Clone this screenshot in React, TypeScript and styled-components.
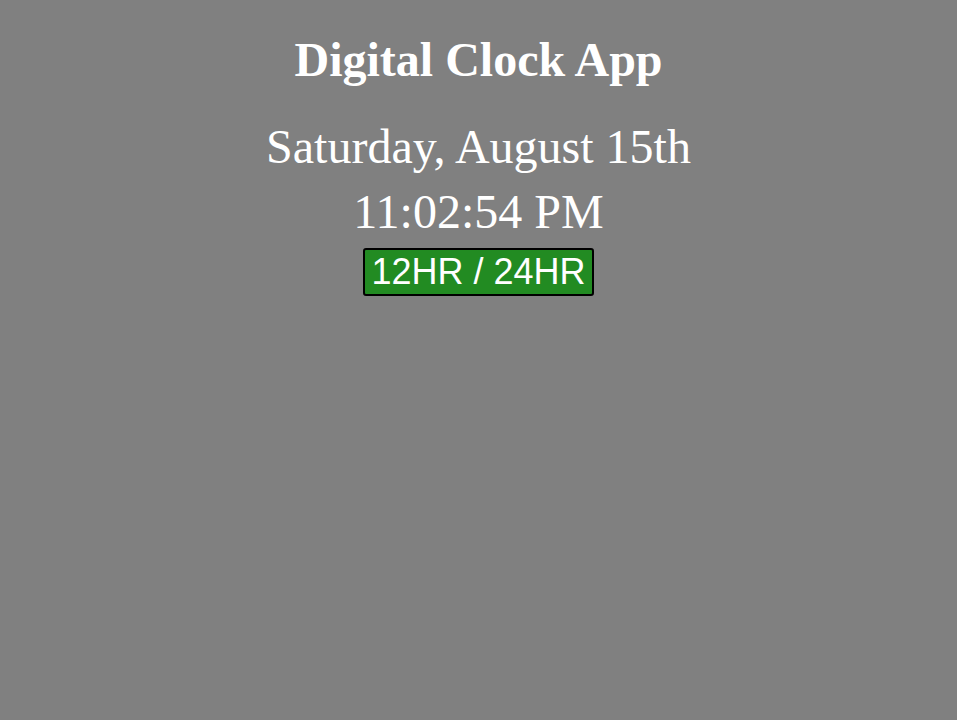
import { createGlobalStyle } from "styled-components";
import styled from "styled-components";

const GlobalStyle = createGlobalStyle`
  html, body {
    background-color: gray;
  }
  body {
    margin: 8px;
    font-family: "Liberation Serif", "Times New Roman", serif;
    color: white;
  }
`;

const Container = styled.main`
  display: flex;
  flex-direction: column;
  align-items: center;
  text-align: center;
`;

const Title = styled.h1`
  font-size: 48px;
  font-weight: bold;
  margin: 24px 0 32px;
  line-height: normal;
`;

const DateText = styled.p`
  font-size: 48px;
  margin: 0;
  line-height: normal;
`;

const TimeText = styled.p`
  font-size: 48px;
  margin: 10px 0 0;
  line-height: normal;
`;

const ToggleButton = styled.button`
  margin-top: 9px;
  font-family: "Liberation Sans", Arial, sans-serif;
  font-size: 36px;
  color: white;
  background-color: forestgreen;
  border: 2px solid black;
  border-radius: 3px;
  padding: 1px 6px;
  line-height: normal;
  cursor: pointer;
`;

const App = () => {
  return (
    <Container>
      <GlobalStyle />
      <Title>Digital Clock App</Title>
      <DateText>Saturday, August 15th</DateText>
      <TimeText>11:02:54 PM</TimeText>
      <ToggleButton>12HR / 24HR</ToggleButton>
    </Container>
  );
};

export default App;
